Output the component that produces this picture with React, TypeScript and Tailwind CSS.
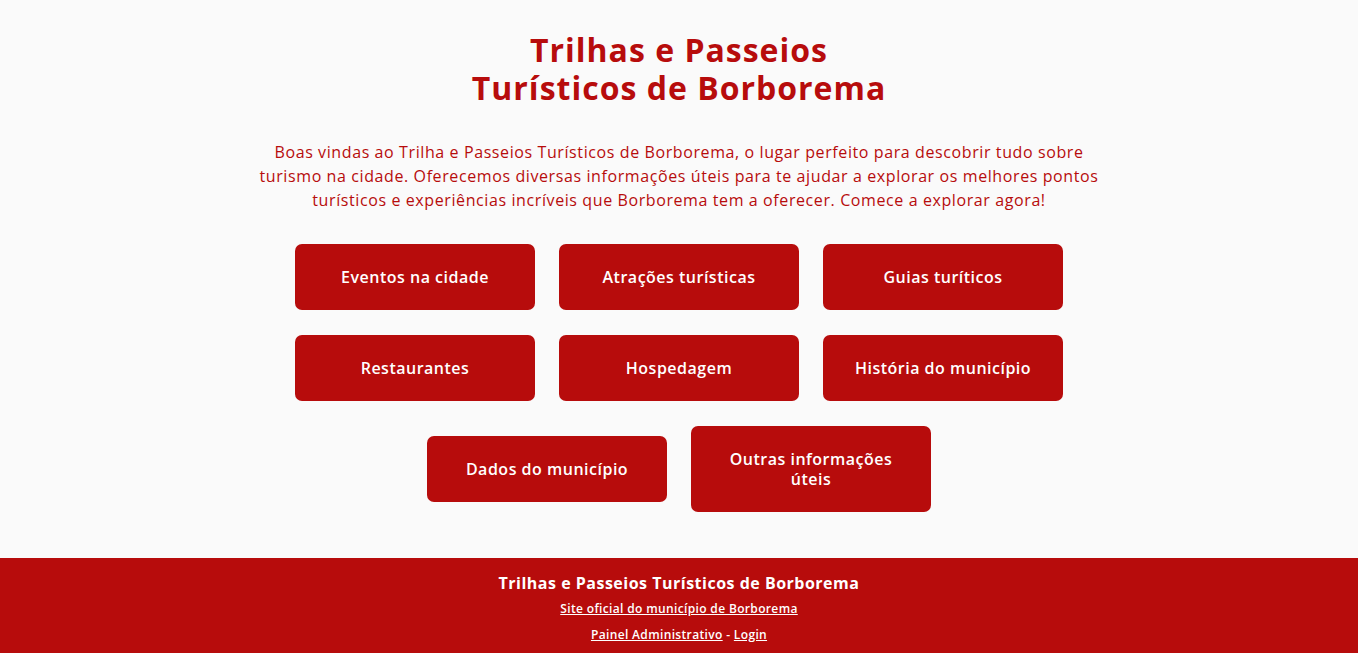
import React from "react";

const buttons1 = ["Eventos na cidade", "Atrações turísticas", "Guias turíticos"];
const buttons2 = ["Restaurantes", "Hospedagem", "História do município"];
const buttons3 = ["Dados do município", "Outras informações úteis"];

function Btn({ label }: { label: string }) {
  return (
    <a
      href="#"
      className="w-[240px] rounded-[7px] bg-[#b70c0c] px-[24px] py-[23px] text-center text-[16px] leading-[20px] font-semibold tracking-[0.5px] text-white"
    >
      {label}
    </a>
  );
}

export default function App() {
  return (
    <div
      className="flex min-h-[653px] flex-col bg-[#fafafa] text-[#b70c0c]"
      style={{ fontFamily: '"Open Sans", "DejaVu Sans", sans-serif' }}
    >
      <main className="flex flex-1 flex-col items-center pt-[31px] pb-[46px]">
        <h1 className="text-center text-[32px] leading-[38px] font-bold tracking-[1px]">
          Trilhas e Passeios
          <br />
          Turísticos de Borborema
        </h1>
        <p className="mt-[33px] max-w-[850px] text-center text-[16px] leading-[24px] tracking-[0.6px]">
          Boas vindas ao Trilha e Passeios Turísticos de Borborema, o lugar perfeito para descobrir tudo sobre turismo na cidade. Oferecemos diversas informações úteis para te ajudar a explorar os melhores pontos turísticos e experiências incríveis que Borborema tem a oferecer. Comece a explorar agora!
        </p>
        <div className="mt-[32px] flex flex-col items-center gap-[25px]">
          <div className="flex items-center gap-[24px]">
            {buttons1.map((b) => (
              <Btn key={b} label={b} />
            ))}
          </div>
          <div className="flex items-center gap-[24px]">
            {buttons2.map((b) => (
              <Btn key={b} label={b} />
            ))}
          </div>
          <div className="flex items-center gap-[24px]">
            {buttons3.map((b) => (
              <Btn key={b} label={b} />
            ))}
          </div>
        </div>
      </main>
      <footer className="flex flex-col items-center bg-[#b70c0c] pt-[13px] pb-[10px] text-white">
        <div className="text-[16px] leading-[24px] font-bold tracking-[0.5px]">
          Trilhas e Passeios Turísticos de Borborema
        </div>
        <a href="#" className="mt-[2px] text-[12px] leading-[24px] font-semibold tracking-[0.35px] underline">
          Site oficial do município de Borborema
        </a>
        <div className="mt-[2px] text-[12px] leading-[24px] font-semibold tracking-[0.35px]">
          <a href="#" className="underline">Painel Administrativo</a>
          <span> - </span>
          <a href="#" className="underline">Login</a>
        </div>
      </footer>
    </div>
  );
}
